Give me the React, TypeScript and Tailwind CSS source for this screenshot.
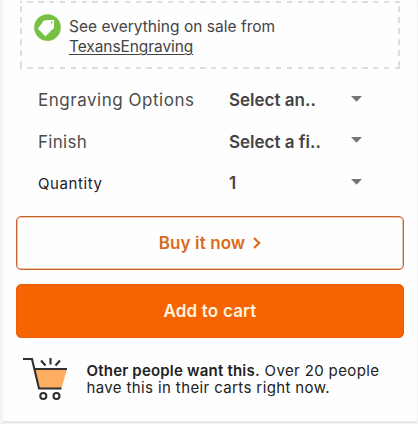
const Caret = () => (
  <svg className="h-[6px] w-[11px]" viewBox="0 0 11 6">
    <path d="M0 0H11L5.5 5.7Z" fill="#757575" />
  </svg>
);

const options = [
  { label: "Engraving Options", value: "Select an..", labelClass: "text-[17px] tracking-[0.52px] text-[#4c4c4c]" },
  { label: "Finish", value: "Select a fi..", labelClass: "text-[17px] tracking-[0.3px] text-[#4c4c4c]" },
  { label: "Quantity", value: "1", labelClass: "text-[15px] tracking-[0.6px] text-[#1c1c1e]" },
];

export default function App() {
  return (
    <div className="h-[424px] w-[418px] overflow-hidden bg-[#f5f3f3] pl-[3px] pr-px font-['Inter','Liberation_Sans',sans-serif]">
      <main className="h-[422px] border-b border-[#e8e8e8] bg-[#fefefe] pl-[13px] pr-[13px] pt-px shadow-[0_1px_1px_#e9e9e9]">
        <section className="ml-1 mr-[4px] flex h-[68px] bg-[repeating-linear-gradient(90deg,#dedede_0_2px,transparent_2px_7.5px,#dedede_7.5px_10.8px),repeating-linear-gradient(90deg,#dedede_0_2px,transparent_2px_7.5px,#dedede_7.5px_10.8px),repeating-linear-gradient(180deg,transparent_0_5px,#dedede_5px_11px),repeating-linear-gradient(180deg,transparent_0_5px,#dedede_5px_11px)] bg-[length:100%_2px,100%_2px,2px_100%,2px_100%] bg-[position:left_top,left_bottom,left_top,right_top] bg-no-repeat pl-[14px] pt-[13px]">
          <svg className="h-[27px] w-[27px] shrink-0" viewBox="0 0 27 27">
            <circle cx="13.5" cy="13.5" r="13.3" fill="#78c043" />
            <path d="M9.9 6.5 19.2 5.8Q20.2 5.8 20.2 6.8L19.9 14 11.5 22.3 3.8 14.8Z" fill="#fff" />
            <circle cx="17.6" cy="8.5" r="0.9" fill="#78c043" />
          </svg>
          <p className="ml-[8px] mt-[3px] text-[15.5px] leading-[20px] tracking-[0.02px] text-[#444]">
            See everything on sale from
            <br />
            <a className="tracking-[-0.08px] underline decoration-1 underline-offset-2">TexansEngraving</a>
          </p>
        </section>

        <section className="mt-[10px]">
          {options.map(({ label, value, labelClass }) => (
            <div key={label} className="flex h-[41.5px] items-center pl-[22px]">
              <span className={`w-[191px] pt-[2px] ${labelClass}`}>{label}</span>
              <span className="w-[122px] pt-[2px] text-[17px] font-semibold text-[#444]">{value}</span>
              <span className="-mt-[2px] flex"><Caret /></span>
            </div>
          ))}
        </section>

        <button className="mt-[12.5px] flex h-[54px] w-full items-center justify-center gap-[8px] rounded-[5px] border border-[#c96029] text-[17px] font-semibold tracking-[0.1px] text-[#d96b1d] shadow-[inset_0_0_0_0.5px_#dd8b60]">
          <span className="pt-[2px]">Buy it now</span>
          <svg className="h-[12px] w-[8px]" viewBox="0 0 8 12" fill="none" stroke="currentColor" strokeWidth="2.2">
            <path d="M1 1 6.2 6 1 11" />
          </svg>
        </button>
        <button className="mt-[14px] flex h-[54px] w-full items-center justify-center rounded-[5px] border border-[#e95e08] bg-[#f56400] pt-[2px] text-[17px] font-semibold tracking-[0.2px] text-[#fff3df]">
          Add to cart
        </button>

        <section className="mt-[19px] flex pl-[7px]">
          <svg className="h-[44px] w-[45px] shrink-0" viewBox="0 0 45 44" fill="none" stroke="#303030" strokeWidth="2.1">
            <path d="M12 12H44L38.5 31H16Z" fill="#ffad60" stroke="none" />
            <path d="M0 2H9L16 31.5H38.5M12 12H44" />
            <path d="M18 3.5 22.5 8.5M27.5 1V7.5M37 3.5 32.5 8.5" />
            <circle cx="20.3" cy="39" r="3" />
            <circle cx="33.5" cy="39" r="3" />
          </svg>
          <div className="ml-[18.5px] mt-[5px] whitespace-nowrap text-[15px] leading-[17px] tracking-[0.38px] text-[#222]">
            <p>
              <b className="font-semibold tracking-[0.2px]">Other people want this.</b> Over 20 people
            </p>
            <p>have this in their carts right now.</p>
          </div>
        </section>
      </main>
    </div>
  );
}
